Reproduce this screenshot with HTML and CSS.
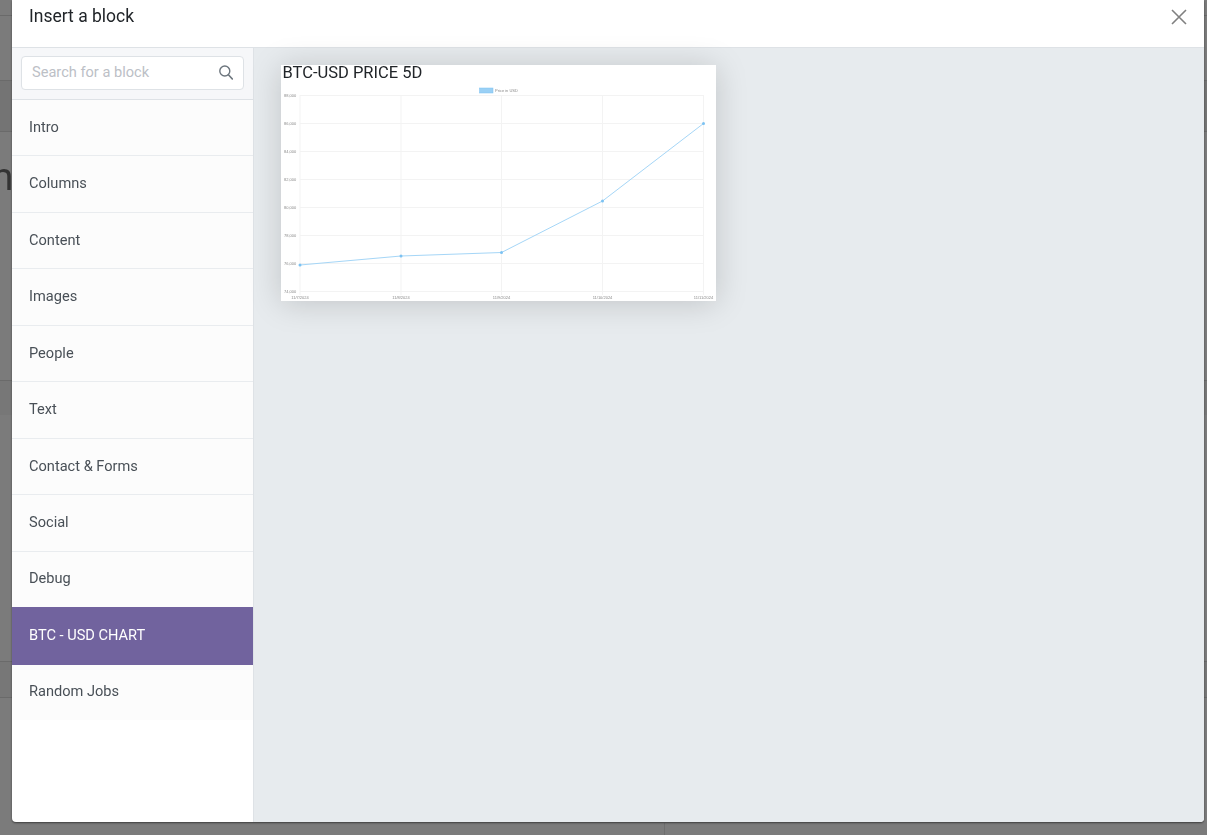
FILE: index.html
```html
<!DOCTYPE html>
<html>
    <head>
        <meta charset="utf-8">
        <title>Insert a block</title>
        <link rel="stylesheet" href="styles.css">
    </head>
    <body>
        <div class="backdrop">
            <div class="behind-band behind-band--a"></div>
            <div class="behind-band behind-band--b"></div>
            <div class="behind-band behind-band--c"></div>
            <div class="behind-band behind-band--d"></div>
            <div class="behind-letter">m</div>
            <div class="behind-divider"></div>
        </div>

        <div class="modal">
            <header class="modal-header">
                <h1 class="modal-title">Insert a block</h1>
                <button class="modal-close" aria-label="Close">
                    <svg width="16" height="16" viewBox="0 0 16 16"><path d="M1 1l14 14M15 1L1 15" stroke="#808080" stroke-width="1.600" fill="none"/></svg>
                </button>
            </header>
            <div class="modal-body">
                <aside class="sidebar">
                    <div class="search-wrap">
                        <div class="search-box">
                            <span class="search-placeholder">Search for a block</span>
                            <svg class="search-icon" width="14" height="15" viewBox="0 0 14 15"><circle cx="5.800" cy="6" r="5" stroke="#6c757d" stroke-width="1.400" fill="none"/><path d="M9.400 9.700l4.400 4.800" stroke="#6c757d" stroke-width="1.600" fill="none"/></svg>
                        </div>
                    </div>
                    <ul class="block-list">
                        <li class="block-item">Intro</li>
                        <li class="block-item">Columns</li>
                        <li class="block-item">Content</li>
                        <li class="block-item">Images</li>
                        <li class="block-item">People</li>
                        <li class="block-item">Text</li>
                        <li class="block-item">Contact &amp; Forms</li>
                        <li class="block-item">Social</li>
                        <li class="block-item">Debug</li>
                        <li class="block-item block-item--active">BTC - USD CHART</li>
                        <li class="block-item block-item--last">Random Jobs</li>
                    </ul>
                </aside>
                <main class="preview">
                    <div class="preview-card">
                        <div class="preview-title">BTC-USD PRICE 5D</div>
                        <svg class="chart" width="435" height="236" viewBox="0 0 435 236">
                            <g class="chart-grid">
                                <path d="M19 30.500H422.500M19 58.500H422.500M19 86.500H422.500M19 114.500H422.500M19 142.500H422.500M19 170.500H422.500M19 198.500H422.500M19 226.500H422.500"/>
                                <path d="M19 30V230M120 30V230M220.500 30V230M321.500 30V230M422.500 30V230"/>
                            </g>
                            <rect class="legend-box" x="198.500" y="23" width="13.500" height="5"/>
                            <text class="chart-label" x="214" y="27">Price in USD</text>
                            <g class="chart-label">
                                <text x="3" y="32">88,000</text>
                                <text x="3" y="60">86,000</text>
                                <text x="3" y="88">84,000</text>
                                <text x="3" y="116">82,000</text>
                                <text x="3" y="144">80,000</text>
                                <text x="3" y="172">78,000</text>
                                <text x="3" y="200">76,000</text>
                                <text x="3" y="228">74,000</text>
                            </g>
                            <g class="chart-label chart-label--x">
                                <text x="19" y="234">11/7/2024</text>
                                <text x="120" y="234">11/8/2024</text>
                                <text x="220.500" y="234">11/9/2024</text>
                                <text x="321.500" y="234">11/10/2024</text>
                                <text x="422.500" y="234">11/11/2024</text>
                            </g>
                            <polyline class="chart-line" points="19,200 120,191 220.500,187.500 321.500,136 422.500,58.500"/>
                            <g class="chart-dot">
                                <circle cx="19" cy="200" r="1.500"/>
                                <circle cx="120" cy="191" r="1.500"/>
                                <circle cx="220.500" cy="187.500" r="1.500"/>
                                <circle cx="321.500" cy="136" r="1.500"/>
                                <circle cx="422.500" cy="58.500" r="1.500"/>
                            </g>
                        </svg>
                    </div>
                </main>
            </div>
        </div>
    </body>
</html>
```

FILE: styles.css
```css
* {
    box-sizing: border-box;
}

html,
body {
    height: 100%;
    margin: 0;
}

body {
    background-color: #7b7b7b;
    color: #212529;
    font-family: Roboto, sans-serif;
    overflow: hidden;
}

.backdrop {
    position: fixed;
    inset: 0;
}

.behind-band {
    position: absolute;
    left: 0;
    right: 0;
    border-top: 1px solid #6a6a6a;
}

.behind-band--a { top: 15px; height: 65px; }
.behind-band--b { top: 80px; height: 52px; border-bottom: 1px solid #6a6a6a; background-color: #747474; }
.behind-band--c { top: 380px; height: 35px; background-color: #777; }
.behind-band--d { top: 661px; height: 37px; border-bottom: 1px solid #6a6a6a; background-color: #777; }

.behind-letter {
    position: absolute;
    left: -20px;
    top: 152px;
    font-size: 38px;
    line-height: 50px;
    color: #333;
}

.behind-divider {
    position: absolute;
    left: 664px;
    top: 823px;
    width: 1px;
    height: 12px;
    background-color: #6e6e6e;
}

.modal {
    position: fixed;
    left: 12px;
    top: 0;
    width: 1192px;
    height: 822px;
    display: flex;
    flex-direction: column;
    background-color: #fff;
    border-radius: 0 0 4px 4px;
    box-shadow: 0 1px 2px rgba(0, 0, 0, 0.5);
    overflow: hidden;
}

.modal-header {
    height: 48px;
    flex-shrink: 0;
    display: flex;
    align-items: flex-start;
    justify-content: space-between;
    border-bottom: 1px solid #dee2e6;
    padding: 5px 17px 0;
}

.modal-title {
    margin: 0;
    font-size: 17.500px;
    font-weight: 400;
    line-height: 22px;
}

.modal-close {
    margin: 4px 0 0;
    padding: 0;
    width: 16px;
    height: 16px;
    border: 0;
    background: none;
    display: flex;
}

.modal-body {
    flex: 1;
    display: flex;
    min-height: 0;
}

.sidebar {
    width: 242px;
    flex-shrink: 0;
    border-right: 1px solid #dee2e6;
}

.search-wrap {
    height: 52px;
    padding: 8px 9px;
    background-color: #f6f7f9;
    border-bottom: 1px solid #dee2e6;
}

.search-box {
    height: 34px;
    display: flex;
    align-items: center;
    justify-content: space-between;
    padding: 0 10px 2px;
    background-color: #fff;
    border: 1px solid #dee2e6;
    border-radius: 4px;
}

.search-placeholder {
    font-size: 14.600px;
    color: #bcc0c6;
}

.block-list {
    list-style: none;
    margin: 0;
    padding: 0;
}

.block-item {
    height: 56.450px;
    display: flex;
    align-items: center;
    padding: 0 0 1.500px 17px;
    font-size: 14.600px;
    color: #495057;
    background-color: #fcfcfc;
    border-bottom: 1px solid #e9ecef;
}

.block-item--active {
    height: 58px;
    margin-top: -1px;
    padding-bottom: 2px;
    color: #fff;
    background-color: #71639e;
    border-bottom: 0;
}

.block-item--last {
    height: 55.500px;
    padding-bottom: 2.500px;
    border-bottom: 0;
}

.preview {
    flex: 1;
    padding: 17px 27px;
    background-color: #e7ebee;
}

.preview-card {
    position: relative;
    width: 435px;
    height: 236px;
    background-color: #fff;
    box-shadow: 0 2px 30px rgba(0, 0, 0, 0.17);
}

.preview-title {
    position: absolute;
    left: 1.500px;
    top: -1px;
    font-size: 16.500px;
    line-height: 18px;
    color: #212529;
}

.chart {
    display: block;
}

.chart-grid path {
    stroke: #f3f3f3;
    stroke-width: 1;
    fill: none;
}

.legend-box {
    fill: #9ad0f5;
    stroke: #7cc2f2;
    stroke-width: 0.500;
}

.chart-label {
    font-family: "Liberation Sans", sans-serif;
    font-size: 4px;
    fill: #8a8a8a;
}

.chart-label--x {
    text-anchor: middle;
}

.chart-line {
    fill: none;
    stroke: #a5d6f7;
    stroke-width: 1;
}

.chart-dot circle {
    fill: #7cc2f2;
}
```
